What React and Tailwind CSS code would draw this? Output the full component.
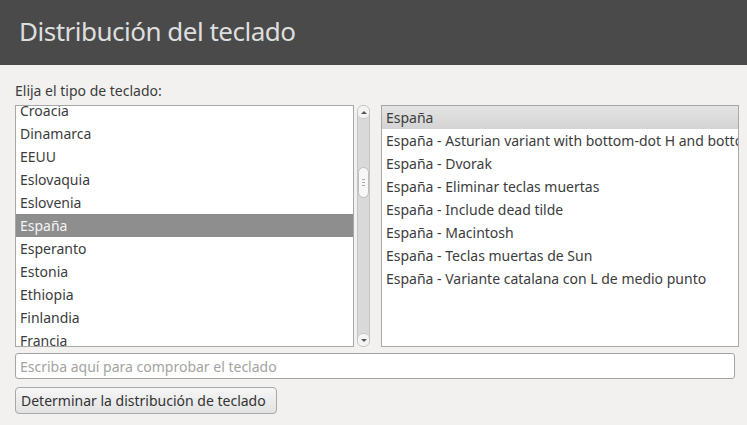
import React from "react";

const left = ["Croacia","Dinamarca","EEUU","Eslovaquia","Eslovenia","España","Esperanto","Estonia","Ethiopia","Finlandia","Francia"];
const right = [
  "España",
  "España - Asturian variant with bottom-dot H and bottom-dot L",
  "España - Dvorak",
  "España - Eliminar teclas muertas",
  "España - Include dead tilde",
  "España - Macintosh",
  "España - Teclas muertas de Sun",
  "España - Variante catalana con L de medio punto",
];

export default function App() {
  return (
    <div className="w-[747px] h-[425px] overflow-hidden bg-[#f2f1f0] text-[#3c3c3c]" style={{ fontFamily: '"Noto Sans", "Open Sans", sans-serif' }}>
      <div className="h-[65px] bg-[#4a4a4a] flex items-center pl-[19px]">
        <h1 className="text-[26px] leading-none text-[#dedede] font-normal tracking-[-0.5px] mt-[-3px]">Distribución del teclado</h1>
      </div>
      <div className="pl-[15px] pr-[8px] pt-[16px]">
        <div className="text-[14px] leading-[20px] h-[24px]">Elija el tipo de teclado:</div>
        <div className="flex h-[242px]">
          <div className="shrink-0 w-[339px] border border-[#a8a8a8] bg-white overflow-hidden">
            <div className="mt-[-7px]">
              {left.map((t) => (
                <div key={t} className={`h-[23px] leading-[23px] pl-[4px] text-[14px] ${t === "España" ? "bg-[#8e8e8e] text-[#f4f4f4]" : ""}`}>{t}</div>
              ))}
            </div>
          </div>
          <div className="shrink-0 ml-[3px] w-[13px] flex flex-col rounded-[6px] border border-[#c4c4c4] bg-[#d9d9d9] overflow-hidden">
            <div className="h-[13px] bg-[#f4f4f4] border-b border-[#c8c8c8] rounded-b-[5px] flex items-center justify-center">
              <div className="w-0 h-0 border-l-[3px] border-r-[3px] border-b-[3px] border-l-transparent border-r-transparent border-b-[#555]" />
            </div>
            <div className="h-[48px]" />
            <div className="h-[31px] bg-[#f7f7f7] border border-[#bdbdbd] rounded-[6px] flex flex-col items-center justify-center gap-[2px]">
              <div className="w-[3px] h-px bg-[#aaa]" />
              <div className="w-[3px] h-px bg-[#aaa]" />
              <div className="w-[3px] h-px bg-[#aaa]" />
            </div>
            <div className="flex-1" />
            <div className="h-[13px] bg-[#f4f4f4] border-t border-[#c8c8c8] rounded-t-[5px] flex items-center justify-center">
              <div className="w-0 h-0 border-l-[3px] border-r-[3px] border-t-[3px] border-l-transparent border-r-transparent border-t-[#555]" />
            </div>
          </div>
          <div className="shrink-0 ml-[11px] w-[358px] border border-[#a8a8a8] bg-white overflow-hidden">
            {right.map((t, i) => (
              <div key={t} className={`h-[23px] leading-[23px] pl-[4px] text-[14px] whitespace-nowrap ${i === 0 ? "bg-gradient-to-b from-[#e4e4e4] to-[#d4d4d4]" : ""}`}>{t}</div>
            ))}
          </div>
        </div>
        <div className="mt-[6px] w-[720px] h-[26px] border border-[#a4a4a4] rounded-[3px] bg-white flex items-center pl-[4px] text-[14px] text-[#a3a3a3]">
          Escriba aquí para comprobar el teclado
        </div>
        <div className="mt-[8px] w-[262px] h-[27px] border border-[#a8a8a8] rounded-[4px] bg-gradient-to-b from-[#f6f6f6] to-[#e2e2e2] flex items-center pl-[5px] text-[14px] text-[#333]">
          Determinar la distribución de teclado
        </div>
      </div>
    </div>
  );
}
